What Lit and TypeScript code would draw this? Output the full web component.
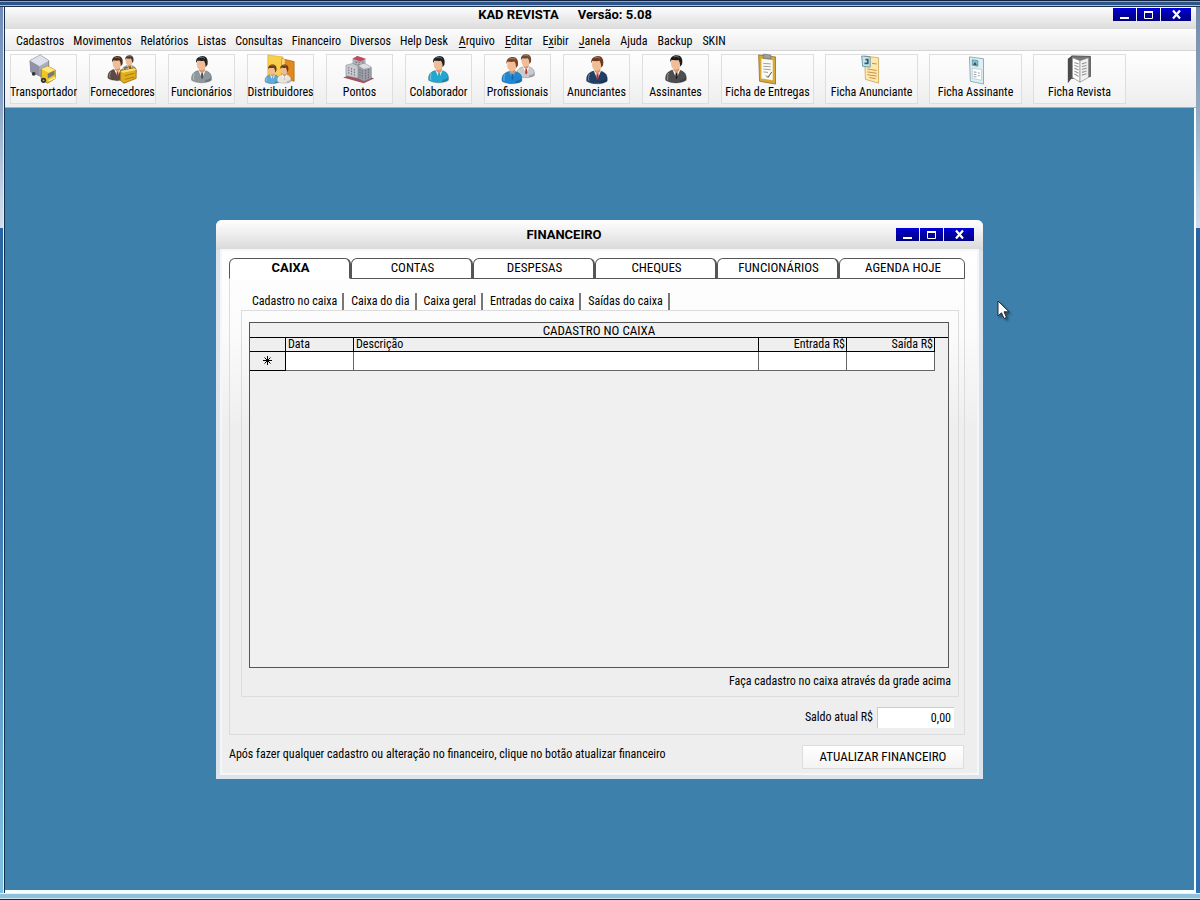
import { LitElement, html, svg, css } from "lit";
import { customElement, property, state } from "lit/decorators.js";
import { classMap } from "lit/directives/class-map.js";

const person = (x: number, y: number, k: number, coat: string, hair: string, shirt = "#fff", tie = "#a33") => svg`
  <g transform="translate(${x} ${y}) scale(${k})">
    <path d="M0 26C-1 20 2 17 7 15.500L14 15.500C19 16.500 22 20 21 26C16 29.500 5 29.500 0 26Z" fill=${coat} stroke="#0005" stroke-width=".7"/>
    <path d="M7 15L11 24L15 15Z" fill=${shirt}/>
    <path d="M10.300 17.500H11.900L12.400 22.500L11 25L9.800 22.500Z" fill=${tie}/>
    <path d="M8 12H14V16L11 18.500L8 16Z" fill="#d9976c"/>
    <ellipse cx="10.300" cy="8.800" rx="4.900" ry="6.400" fill="#f0bd98"/>
    <path d="M4.800 7.500C3.800 2.500 7.500 .2 11 .2C15.500 0 18 3.500 16.800 9.500L14.800 12C15 8.500 14 6 13 5C10.500 6 7 5 5.800 5.300Z" fill=${hair}/>
    <path d="M8 2C10 1.200 12.500 1.400 14 2.800" stroke="#fff5" fill="none"/>
    <path d="M3 18.500C2 20 1.700 23 2.200 25.500" stroke="#fff6" fill="none"/>
    <path d="M15 25.500C18 25.500 20 24 20.500 22V26C19 27.500 17 28 14 28Z" fill="#0003"/>
  </g>`;

const icons: Record<string, unknown> = {
  truck: svg`
    <path d="M1 6L12 0L21 6V19L13 23L2 18Z" fill="#a9acba" stroke="#666a78" stroke-width=".8"/>
    <path d="M1 6L12 0L21 6L11 12Z" fill="#dfe1ec"/><path d="M1 6L11 12V22L2 18Z" fill="#8f93a5"/>
    <path d="M13 15L20 12L28 16V25L20 30L13 26Z" fill="#f2c522" stroke="#94700c" stroke-width=".8"/>
    <path d="M13 15L20 12L28 16L21 19Z" fill="#ffe779"/><path d="M20 20L27 16.500V21L20 25Z" fill="#6f7980"/>
    <path d="M21 27.500L28 24" stroke="#fff3a5" stroke-width="1.600"/>
    <circle cx="15.500" cy="27" r="2.800" fill="#333"/><circle cx="5" cy="20" r="2" fill="#333"/><circle cx="15.500" cy="27" r="1" fill="#aaa"/>`,
  suppliers: svg`
    ${person(15, 0, 0.72, "#9aa0a8", "#4a3a30")}${person(0, 1, 0.92, "#5b4a44", "#4a2c1c")}
    <path d="M13 17L28 14L30 16V25L17 30L13 27Z" fill="#e0ae1c" stroke="#8b6508" stroke-width=".8"/>
    <path d="M13 17L28 14L30 16L16 19Z" fill="#ffe06a"/><path d="M18 16V13.500L24 12.500V15" fill="none" stroke="#8b6508" stroke-width="1.300"/>
    <path d="M18 22L28 19.500M18 26L28 23.500" stroke="#a87c10"/>`,
  employee: person(5, 1, 1, "#8f979e", "#222", "#eef3f7", "#555"),
  distributors: svg`
    <path d="M2 0L18 2V25L2 23Z" fill="#f7cf4a" stroke="#e0a82a" stroke-width=".7"/>
    <path d="M17 4L30 7V28L17 24Z" fill="#e08a1e" stroke="#a85c0c" stroke-width=".7"/><path d="M17 4L20 4.700V25L17 24Z" fill="#ffd77a"/>
    ${person(-1, 10, 0.72, "#5fa9d8", "#6b3a1c", "#e8f4ff", "#5fa9d8")}${person(12, 10, 0.7, "#e9e4e0", "#6b3a1c", "#fff", "#ccc")}`,
  buildings: svg`
    <path d="M-2 24L14 18L31 25L20 30Z" fill="#a0525e"/>
    <path d="M8 4L13 1L22 4V20L8 20Z" fill="#aeb0b8"/><path d="M8 4L13 1L22 4L17 7Z" fill="#c24a5c"/>
    <path d="M1 11L8 9L15 12V25L1 22Z" fill="#c9cad0" stroke="#83858f" stroke-width=".6"/>
    <path d="M14 11L21 9L28 13V25L20 28L14 25Z" fill="#9c9ea8" stroke="#74767f" stroke-width=".6"/>
    <path d="M14 11L21 9L28 13L20 15Z" fill="#dcdde2"/>
    <path d="M4 13V21M7 14V22M10 15V23M16 15V24M18.500 16V25M22 16V26M25 15V25M12 7V10M15 7V11M19 7V9" stroke="#666872" stroke-dasharray="1.500 1.200"/>`,
  collaborator: person(5, 1, 1, "#22a7d0", "#222", "#d4f1fb", "#22a7d0"),
  professionals: svg`${person(15, -1, 0.88, "#c9cacf", "#6b4a30", "#fff", "#a33")}${person(-1, 2, 1, "#1f86d2", "#7a4524", "#4aa7e8", "#1668ab")}`,
  advertiser: person(5, 1, 1.04, "#1f3f66", "#6b3a1c", "#e8eef5", "#b03040"),
  subscriber: person(5, 0, 1.04, "#4c4e52", "#1c1c1c", "#fff", "#222"),
  clipboard: svg`
    <path d="M6 0L24 2V31L7 28Z" fill="#d8a93a" stroke="#8d6a18" stroke-width=".8"/>
    <path d="M9 4L21 5.500V27L9 25Z" fill="#fbfbf6"/><path d="M11 -1L19 0V4L11 3.500Z" fill="#9aa0a6" stroke="#666" stroke-width=".6"/>
    <path d="M11 9L19 9.500M11 12L19 12.600M11 15L19 15.700M11 18L16 18.600" stroke="#9a9a9a"/><path d="M14 22L16 24L20 18" stroke="#444" fill="none"/>`,
  adCard: svg`
    <path d="M8 1L23 3V30L9 26Z" fill="#fbe9b0" stroke="#c8a04a" stroke-width=".8"/>
    <path d="M5 1L14 2V13L6 12Z" fill="#c7e4ee" stroke="#4b8296" stroke-width=".8"/><path d="M8 9H11.500V5H9" stroke="#2d5a6d" stroke-width="1.800" fill="none"/>
    <path d="M16 9L21 9.500M11 15L21 16.500M11 18L21 19.500M11 21L21 22.500M13 24L20 25.300" stroke="#cf8a3a"/>`,
  subCard: svg`
    <path d="M9 2L24 4V31L10 28Z" fill="#dceff4" stroke="#6f9aa8" stroke-width=".8"/>
    <path d="M12 5L18 6V12L12 11Z" fill="#86c0c8" stroke="#3b7784" stroke-width=".6"/><path d="M13 10.500L15 7.500L17 11" fill="#2d4f5a"/>
    <path d="M12 14L22 15.500V27L12 25Z" fill="#fff" stroke="#a5b2b8" stroke-width=".6"/><path d="M13.500 18L16.500 18.500M13.500 20.500L16.500 21M13.500 23L16.500 23.500M18 19L20 19.400M18 22L20 22.400" stroke="#8a979d"/>`,
  magazine: svg`
    <path d="M3 4L7 1V25L3 30Z" fill="#4a4a4c"/><path d="M7 1L27 1.500V23L7 25Z" fill="#77777a" stroke="#4a4a4c"/>
    <path d="M8 3L16 6V29L8 24Z" fill="#fff" stroke="#8a8a8c" stroke-width=".7"/><path d="M16 6L25 3V24L16 29Z" fill="#f1f1f1" stroke="#8a8a8c" stroke-width=".7"/>
    <path d="M10 8L14.500 9.500M10 11L14.500 12.700M10 14L14.500 16M10 17L14.500 19.500M10 20L14.500 23M18 9.500L23 8M18 12.500L23 11M18 15.500L23 14M18 18.500L23 17M18 21.500L23 20" stroke="#9a9a9c" stroke-width="1.200"/>`,
};

const menus = [
  ["Cadastros", "Movimentos", "Relatórios", "Listas", "Consultas", "Financeiro", "Diversos", "Help Desk"],
  ["_Arquivo", "_Editar", "E_xibir", "_Janela", "Ajuda", "Backup", "SKIN"],
];

const people = [
  ["truck", "Transportador"], ["suppliers", "Fornecedores"], ["employee", "Funcionários"], ["distributors", "Distribuidores"],
  ["buildings", "Pontos"], ["collaborator", "Colaborador"], ["professionals", "Profissionais"], ["advertiser", "Anunciantes"], ["subscriber", "Assinantes"],
];
const sheets = [["clipboard", "Ficha de Entregas"], ["adCard", "Ficha Anunciante"], ["subCard", "Ficha Assinante"], ["magazine", "Ficha Revista"]];

const base = css`
  *, *::before { box-sizing: border-box; }
  button, input { font: inherit; color: inherit; margin: 0; padding: 0; border: 0; background: none; border-radius: 0; }
`;

@customElement("window-controls")
class WindowControls extends LitElement {
  static styles = [base, css`
    :host { display: flex; gap: 1px; }
    button { width: 23px; height: 13px; background: linear-gradient(#0000dc, #00009a 60%, #000084); display: grid; place-items: center; }
    .close { width: 30px; }
    svg { display: block; }
  `];
  render() {
    return html`
      <button aria-label="Minimizar"><svg width="11" height="11"><path d="M1 9H10" stroke="#fff" stroke-width="2"/></svg></button>
      <button aria-label="Maximizar"><svg width="11" height="11"><path d="M1.500 3V9.500H9.500V3" stroke="#fff" fill="none"/><path d="M1 3H10" stroke="#fff" stroke-width="2"/></svg></button>
      <button class="close" aria-label="Fechar"><svg width="11" height="11"><path d="M2 1.500L9 9.500M9 1.500L2 9.500" stroke="#fff" stroke-width="2.200"/></svg></button>`;
  }
}

@customElement("tool-button")
class ToolButton extends LitElement {
  @property() icon = "";
  @property() label = "";
  static styles = [base, css`
    :host { display: block; }
    button { width: 100%; height: 50px; border: 1px solid #dedede; background: linear-gradient(#fdfdfd, #f3f3f3); display: flex; flex-direction: column; align-items: center; justify-content: flex-start; white-space: nowrap; line-height: 14px; }
    svg { width: 30px; height: 30px; flex: none; overflow: visible; }
  `];
  render() {
    return html`<button><svg viewBox="0 0 32 32" aria-hidden="true">${icons[this.icon]}</svg><span>${this.label}</span></button>`;
  }
}

@customElement("finance-window")
class FinanceWindow extends LitElement {
  @state() tab = 0;
  tabs = ["CAIXA", "CONTAS", "DESPESAS", "CHEQUES", "FUNCIONÁRIOS", "AGENDA HOJE"];
  subtabs = ["Cadastro no caixa", "Caixa do dia", "Caixa geral", "Entradas do caixa", "Saídas do caixa"];
  static styles = [base, css`
    :host { display: flex; flex-direction: column; width: 767px; max-width: 100%; border-radius: 6px 6px 0 0; overflow: hidden; background: #dde3ec; }
    header { display: flex; height: 30px; padding: 8px 9px 0 16px; background: linear-gradient(#fff, #f2f2f2 35%, #d9d9d9); }
    h2 { flex: 1; margin: 0; text-align: center; font: bold 13px/14px Roboto, sans-serif; }
    .body { margin: 0 5px 5px; border: 1px solid #f6f6f8; padding: 7px 12px 4px 7px; background: linear-gradient(#fff, #fbfbfb 80px, #eee 180px); outline: 1px solid #f4f6fa; }
    .tabs { display: grid; grid-template-columns: repeat(5, 122fr) 126fr; height: 21px; }
    .tabs button { border: 1px solid #555; border-right-width: 2px; border-radius: 6px 6px 0 0; padding-left: 2px; background: #fff; font-size: 13px; line-height: 18px; }
    .tabs button:last-child { border-right-width: 1px; }
    .tabs .on { border-bottom-color: transparent; font-family: Roboto, sans-serif; font-weight: bold; }
    .panel { border: 1px solid #dcdcdc; border-top: 0; padding: 14px 5px 6px 11px; }
    .subtabs { display: flex; height: 17px; }
    .subtabs button { padding: 0 5px; border-right: 2px solid #777; height: 17px; line-height: 17px; }
    .subtabs button + button { padding-left: 7px; }
    .subtabs button:first-child { padding-left: 11px; }
    .inner { border: 1px solid #dcdcdc; padding: 11px 9px 8px 7px; }
    .grid { height: 346px; border: 1px solid #555; background: #f0f0f0; }
    .caption { height: 15px; border-bottom: 1px solid #000; text-align: center; font-size: 13px; line-height: 15px; }
    table { width: calc(100% - 13px); border-collapse: separate; border-spacing: 0; table-layout: fixed; }
    th { height: 14px; padding: 0 1px 0 2px; border: solid #000; border-width: 0 1px 1px 0; font-weight: normal; text-align: left; line-height: 13px; background: #efefef; }
    td { height: 19px; padding: 0; background: #fff; border: solid #666; border-width: 0 1px 1px 0; }
    td input { display: block; width: 100%; height: 18px; }
    tbody th { height: 19px; padding: 0; text-align: center; }
    tbody svg { display: block; margin: auto; }
    .num { text-align: right; }
    .c0 { width: 36px; } .c1 { width: 68px; } .c3 { width: 88px; }
    .hint { margin: 6px -2px 0 0; line-height: 14px; text-align: right; }
    .balance { display: flex; justify-content: flex-end; align-items: center; gap: 4px; padding: 10px 5px 0 0; }
    .balance input { width: 77px; height: 21px; background: #fff; border: solid #ccc; border-width: 1px 0 0 1px; text-align: right; padding-right: 3px; }
    footer { display: flex; justify-content: space-between; align-items: flex-start; padding: 10px 1px 0 0; }
    footer p { margin: 0; line-height: 18px; }
    footer button { width: 162px; height: 24px; border: 1px solid #ddd; background: linear-gradient(#fff, #f3f3f3); font-size: 13px; }
  `];
  render() {
    return html`
      <header><h2>FINANCEIRO</h2><window-controls></window-controls></header>
      <div class="body">
        <div class="tabs" role="tablist">${this.tabs.map((t, i) => html`<button role="tab" aria-selected=${this.tab === i} class=${classMap({ on: this.tab === i })} @click=${() => (this.tab = i)}>${t}</button>`)}</div>
        <div class="panel">
          <div class="subtabs" role="tablist">${this.subtabs.map((t) => html`<button role="tab">${t}</button>`)}</div>
          <div class="inner">
            <div class="grid">
              <div class="caption" id="cap">CADASTRO NO CAIXA</div>
              <table aria-labelledby="cap">
                <colgroup><col class="c0"><col class="c1"><col><col class="c3"><col class="c3"></colgroup>
                <thead><tr><th></th><th>Data</th><th>Descrição</th><th class="num">Entrada R$</th><th class="num">Saída R$</th></tr></thead>
                <tbody><tr>
                  <th aria-label="Novo registro"><svg width="11" height="11"><path d="M5.500 1V10M1 5.500H10M2.500 2.500L8.500 8.500M8.500 2.500L2.500 8.500" stroke="#000"/></svg></th>
                  ${["Data", "Descrição", "Entrada R$", "Saída R$"].map((l) => html`<td><input aria-label=${l}></td>`)}
                </tr></tbody>
              </table>
            </div>
            <p class="hint">Faça cadastro no caixa através da grade acima</p>
          </div>
          <div class="balance"><label for="saldo">Saldo atual R$</label><input id="saldo" value="0,00"></div>
        </div>
        <footer><p>Após fazer qualquer cadastro ou alteração no financeiro, clique no botão atualizar financeiro</p><button>ATUALIZAR FINANCEIRO</button></footer>
      </div>`;
  }
}

@customElement("app-root")
class AppRoot extends LitElement {
  static styles = [base, css`
    :host { display: flex; flex-direction: column; min-height: 100vh; box-sizing: border-box; position: relative; font: 12px "Roboto Condensed", Roboto, sans-serif; color: #000;
      padding: 7px 4px 7px 4px;
      background:
        linear-gradient(#14263f 0 1px, #86a5c8 1px 2px, #2c548a 2px 5px, #a9bfd6 5px 6px, #1c3350 6px) top / 100% 7px no-repeat,
        linear-gradient(#e4f4fb 0 1px, #90c0dc 1px 5px, #cde6f2 5px 6px, #10284a 6px) bottom / 100% 7px no-repeat,
        linear-gradient(90deg, transparent 0 3px, #e8eef5 3px 4px, transparent 4px) left / 50% 100% no-repeat,
        linear-gradient(#7089b5, #8aa3c8 100px, #c4d5e8 200px, #cfdcea 228px, #2763a3 228px, #3a78b4 500px, #7ebfe0 850px) left / 50% 100% no-repeat,
        linear-gradient(#7089a8, #8ea6c0 100px, #c4d5e8 200px, #cfdcea 228px, #2763a3 228px, #2f6fb4); }
    .frame { flex: 1; display: flex; flex-direction: column; border-left: 1px solid #14304f; }
    .title { display: flex; height: 22px; padding: 1px 5px 0 12px; background: linear-gradient(#fdfdfd, #efefef 40%, #dcdcdc); }
    h1 { flex: 1; margin: 0; display: flex; justify-content: center; gap: 19px; font: bold 13px/14px Roboto, sans-serif; }
    nav { display: flex; gap: 11px; height: 22px; padding: 0 11px; background: linear-gradient(#fcfcfc, #ececec); border-bottom: 1px solid #d5d5d5; }
    .menus { display: flex; gap: 10px; }
    .menus:first-child { gap: 9px; }
    nav button { line-height: 22px; padding-top: 1px; }
    u { text-underline-offset: 2px; }
    .tools { display: flex; gap: 12px; height: 57px; padding: 3px 5px 0; background: linear-gradient(#fff, #ededed); border-bottom: 1px solid #c99fb0; }
    .tools tool-button { width: 67px; }
    .sheets { display: flex; gap: 11px; }
    .tools .sheets tool-button { width: 93px; }
    .desk { flex: 1; display: grid; place-items: center; background: #3c80ab; border: solid #f4ffff; border-width: 0 2px 3px 0; }
    .pointer { position: absolute; left: 997px; top: 300px; filter: drop-shadow(2px 2px 1px #0006); }
  `];
  label(m: string) {
    const [a, b] = m.split("_");
    return b === undefined ? a : html`${a}<u>${b[0]}</u>${b.slice(1)}`;
  }
  render() {
    const tool = ([i, l]: string[]) => html`<tool-button .icon=${i} .label=${l}></tool-button>`;
    return html`
      <div class="frame">
        <div class="title"><h1><span>KAD REVISTA</span><span>Versão: 5.08</span></h1><window-controls></window-controls></div>
        <nav>${menus.map((g) => html`<div class="menus">${g.map((m) => html`<button>${this.label(m)}</button>`)}</div>`)}</nav>
        <div class="tools">${people.map(tool)}<div class="sheets">${sheets.map(tool)}</div></div>
        <main class="desk"><finance-window></finance-window></main>
      </div>
      <svg class="pointer" width="13" height="20" aria-hidden="true"><path d="M1 1V16L4.500 12.800L7 18.500L9.500 17.400L7 11.800H12Z" fill="#fff" stroke="#222b38"/></svg>`;
  }
}
